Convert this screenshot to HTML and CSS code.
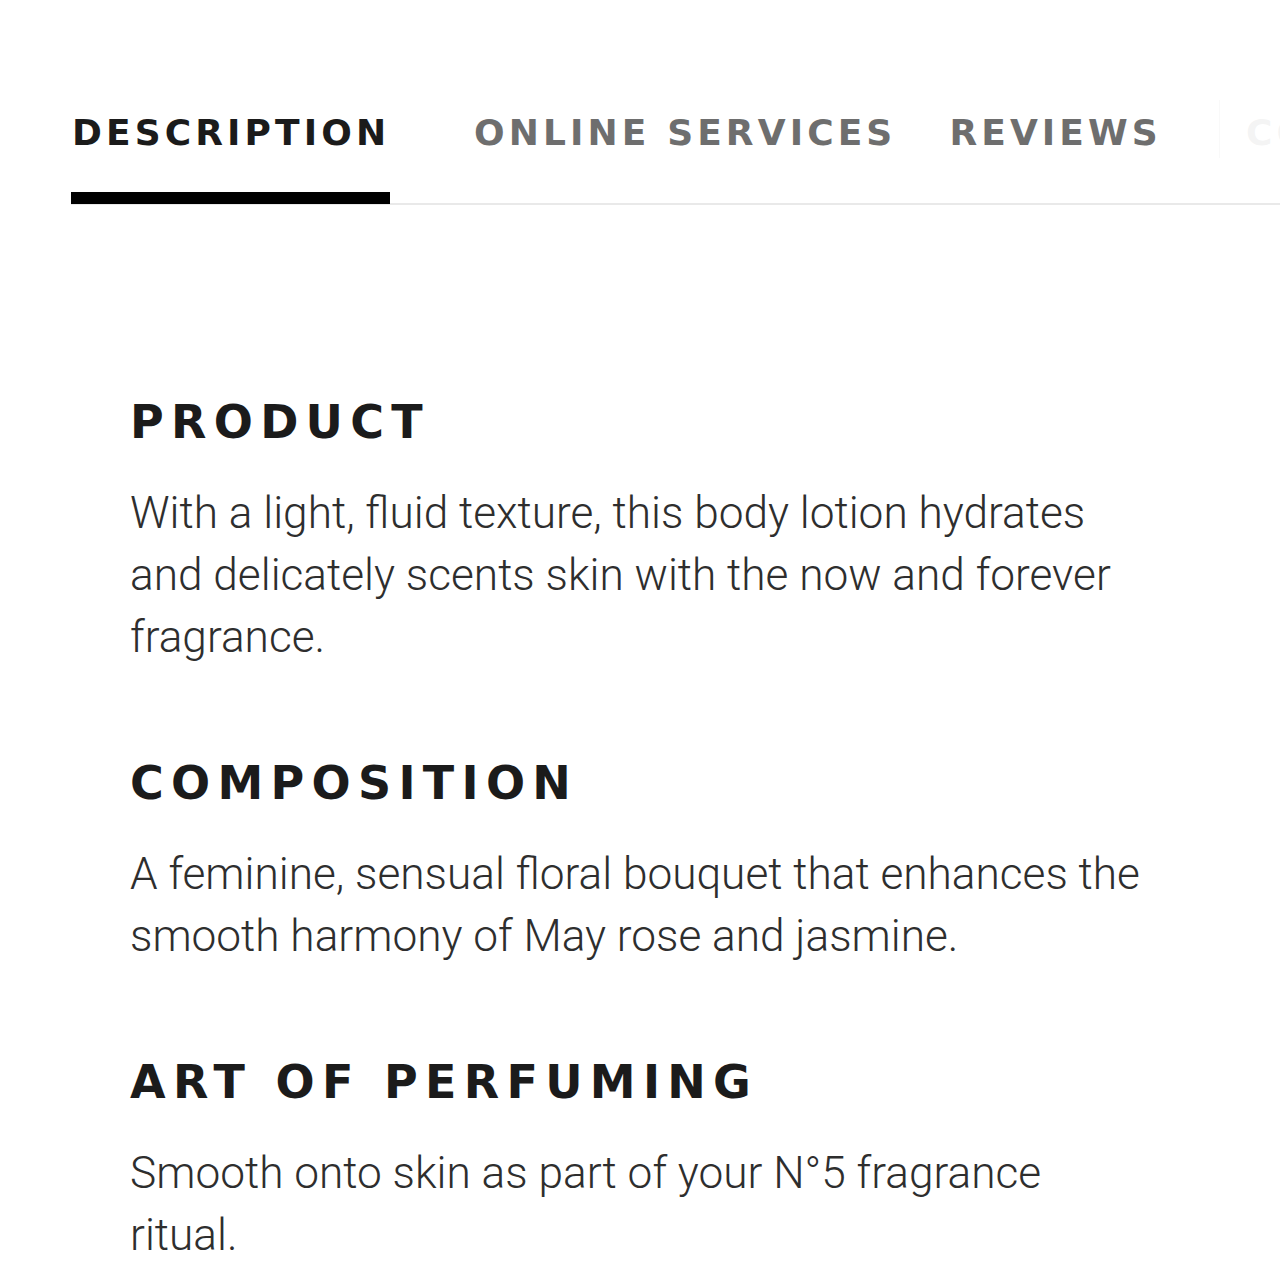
FILE: index.html
```html
<!DOCTYPE html>
<html lang="en">
<head>
<meta charset="utf-8">
<title>Description</title>
<link rel="stylesheet" href="styles.css">
</head>
<body>
<div class="tabs-wrap">
  <nav class="tabs">
    <a class="tab tab-desc active" href="#">DESCRIPTION</a>
    <a class="tab tab-online" href="#">ONLINE SERVICES</a>
    <a class="tab tab-reviews" href="#">REVIEWS</a>
    <a class="tab tab-more" href="#">CONTACT</a>
  </nav>
  <div class="fade"></div>
</div>
<main class="content">
  <section class="block">
    <h2 class="block-title">PRODUCT</h2>
    <p class="block-text">With a light, fluid texture, this body lotion hydrates and delicately scents skin with the now and forever fragrance.</p>
  </section>
  <section class="block">
    <h2 class="block-title">COMPOSITION</h2>
    <p class="block-text">A feminine, sensual floral bouquet that enhances the smooth harmony of May rose and jasmine.</p>
  </section>
  <section class="block">
    <h2 class="block-title">ART OF PERFUMING</h2>
    <p class="block-text">Smooth onto skin as part of your N°5 fragrance ritual.</p>
  </section>
</main>
</body>
</html>
```
FILE: styles.css
```css
html, body {
  margin: 0;
  padding: 0;
  background: #ffffff;
}
body {
  width: 1280px;
  height: 1280px;
  overflow: hidden;
  font-family: Roboto, "Liberation Sans", sans-serif;
}
.tabs-wrap {
  position: relative;
  padding-top: 115px;
  padding-left: 71px;
}
.tabs {
  display: flex;
  white-space: nowrap;
  border-bottom: 2px solid #e9e9e9;
}
.tab {
  display: block;
  font-family: "DejaVu Sans", "Liberation Sans", sans-serif;
  font-weight: 700;
  font-size: 36px;
  line-height: 36px;
  letter-spacing: 4.1px;
  color: #6e6e6e;
  text-decoration: none;
  padding: 0 0 41px 1px;
  border-bottom: 12px solid transparent;
  margin-bottom: -1px;
  flex: none;
}
.tab.active {
  color: #1b1b1b;
  border-bottom-color: #000000;
  margin-right: -3px;
}
.tab-online { margin-left: 86px; }
.tab-reviews { margin-left: 52px; }
.tab-more { margin-left: 83px; }
.fade {
  position: absolute;
  left: 1219px;
  top: 100px;
  width: 61px;
  height: 58px;
  background: rgba(255, 255, 255, 0.92);
  border-left: 1px solid rgba(0, 0, 0, 0.025);
}
.content {
  padding-left: 130px;
  width: 1016px;
  padding-top: 194px;
}
.block {
  margin-bottom: 92px;
}
.block-title {
  margin: 0 0 37px 0;
  font-family: "DejaVu Sans", "Liberation Sans", sans-serif;
  font-weight: 700;
  font-size: 46px;
  line-height: 46px;
  letter-spacing: 7.3px;
  color: #1b1b1b;
}
.block-text {
  margin: 0;
  font-family: Roboto, "Liberation Sans", sans-serif;
  font-weight: 300;
  font-size: 44.2px;
  line-height: 62px;
  color: #2e2e2e;
}
```
